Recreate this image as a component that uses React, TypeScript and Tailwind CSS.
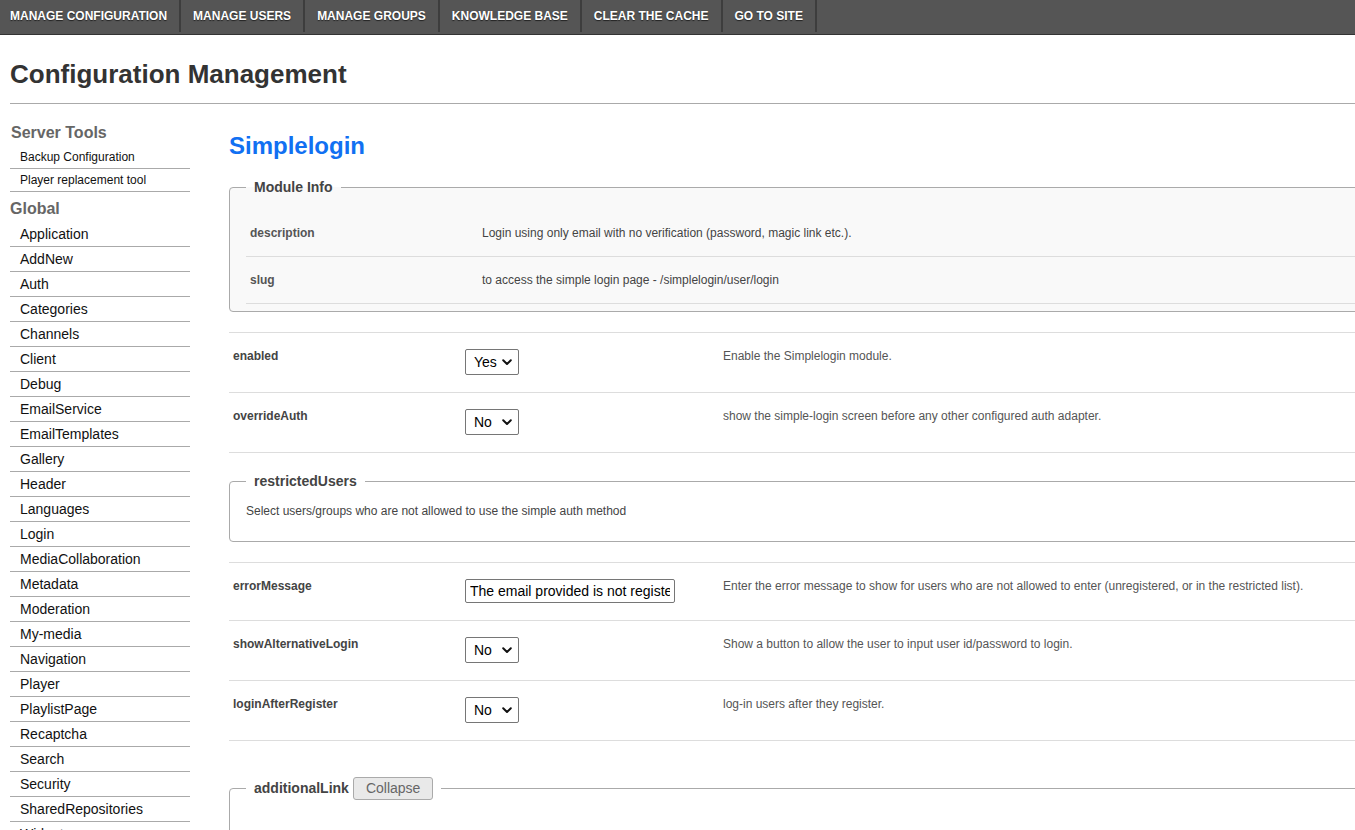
import React from 'react';

const navItems = ['Manage Configuration', 'Manage Users', 'Manage Groups', 'Knowledge Base', 'Clear the cache', 'Go to site'];
const serverTools = ['Backup Configuration', 'Player replacement tool'];
const globalModules = [
  'Application', 'AddNew', 'Auth', 'Categories', 'Channels', 'Client', 'Debug', 'EmailService', 'EmailTemplates',
  'Gallery', 'Header', 'Languages', 'Login', 'MediaCollaboration', 'Metadata', 'Moderation', 'My-media', 'Navigation',
  'Player', 'PlaylistPage', 'Recaptcha', 'Search', 'Security', 'SharedRepositories', 'Widgets',
];

const Chevron = () => (
  <svg width="10" height="7" viewBox="0 0 10 7" className="pointer-events-none absolute right-[7px] top-[10px]">
    <path d="M1.2 1.3 L5 5 L8.8 1.3" fill="none" stroke="#111" strokeWidth="2" strokeLinecap="round" strokeLinejoin="round" />
  </svg>
);

const YesNo: React.FC<{ value: 'Yes' | 'No' }> = ({ value }) => (
  <div className="relative h-[26px] w-[54px]">
    <select
      defaultValue={value}
      className="h-[26px] w-[54px] appearance-none rounded-[2px] border border-[#767676] bg-white pl-[8px] text-[14px] text-black outline-none"
    >
      <option>Yes</option>
      <option>No</option>
    </select>
    <Chevron />
  </div>
);

const SettingRow: React.FC<{ label: string; control: React.ReactNode; help: string }> = ({ label, control, help }) => (
  <div className="grid grid-cols-[232px_258px_1fr] border-b border-[#ddd] pb-[17px] pl-[4px] pt-4">
    <div className="text-[12px] font-bold leading-[14px] text-[#444]">{label}</div>
    <div>{control}</div>
    <div className="text-[12px] leading-[14px] text-[#555]">{help}</div>
  </div>
);

const InfoRow: React.FC<{ label: string; value: string }> = ({ label, value }) => (
  <div className="grid h-[47px] grid-cols-[232px_1fr] items-center border-b border-[#ddd] pl-[4px]">
    <div className="text-[12px] font-bold text-[#555]">{label}</div>
    <div className="text-[12px] text-[#444]">{value}</div>
  </div>
);

export default function App() {
  return (
    <div className="h-[830px] w-full overflow-hidden bg-white font-['Liberation_Sans',Arial,sans-serif] text-[#222]">
      <nav className="flex h-[35px] w-full border-b border-[#333] bg-[#555] pb-[2px]">
        {navItems.map((item, i) => (
          <a
            key={item}
            href="#"
            className={`flex items-center border-r-2 border-[#3d3d3d] pr-[12px] text-[12px] font-bold uppercase text-white [text-shadow:0_1px_1px_#222] ${i === 0 ? 'pl-[10px]' : 'pl-[12px]'}`}
          >
            {item}
          </a>
        ))}
      </nav>

      <div className="w-[1500px] px-[10px]">
        <h1 className="mt-[24px] text-[26px] font-bold leading-[30px] text-[#333]">Configuration Management</h1>
        <hr className="mt-[14px] border-t border-[#aaa]" />

        <div className="flex">
          <aside className="w-[180px] shrink-0 pt-[18px]">
            <h2 className="mb-[2px] h-[22px] pl-[1px] text-[16px] font-bold leading-[22px] text-[#666]">Server Tools</h2>
            <ul>
              {serverTools.map((t) => (
                <li key={t} className="flex h-[23px] items-center border-b border-[#aaa] pl-[10px] text-[12px] text-[#111]">{t}</li>
              ))}
            </ul>
            <h2 className="mb-[2px] mt-[6px] h-[22px] text-[16px] font-bold leading-[22px] text-[#666]">Global</h2>
            <ul>
              {globalModules.map((m) => (
                <li key={m} className="flex h-[25px] items-center border-b border-[#aaa] pl-[10px] text-[14px] text-[#111]">{m}</li>
              ))}
            </ul>
          </aside>

          <main className="ml-[39px] w-[1250px] shrink-0 pt-[28px]">
            <h2 className="text-[24px] font-bold leading-[28px] text-[#1170f2]">Simplelogin</h2>

            <fieldset className="mt-[19px] rounded-[4px] border border-[#aaa] bg-[#f9f9f9] px-4 pb-[7px] pt-[14px]">
              <legend className="px-2 text-[14px] font-bold leading-[17px] text-[#444]">Module Info</legend>
              <InfoRow label="description" value="Login using only email with no verification (password, magic link etc.)." />
              <InfoRow label="slug" value="to access the simple login page - /simplelogin/user/login" />
            </fieldset>

            <div className="mt-[20px] border-t border-[#ddd]">
              <SettingRow label="enabled" control={<YesNo value="Yes" />} help="Enable the Simplelogin module." />
              <SettingRow label="overrideAuth" control={<YesNo value="No" />} help="show the simple-login screen before any other configured auth adapter." />
            </div>

            <fieldset className="mt-[20px] rounded-[4px] border border-[#aaa] px-4 pb-[23px] pt-[14px]">
              <legend className="px-2 text-[14px] font-bold leading-[17px] text-[#444]">restrictedUsers</legend>
              <p className="text-[12px] leading-[14px] text-[#444]">Select users/groups who are not allowed to use the simple auth method</p>
            </fieldset>

            <div className="mt-[20px] border-t border-[#ddd]">
              <SettingRow
                label="errorMessage"
                control={
                  <input
                    defaultValue="The email provided is not registered with us."
                    className="h-[24px] w-[210px] rounded-[2px] border border-[#767676] bg-white px-[4px] text-[14px] text-black outline-none"
                  />
                }
                help="Enter the error message to show for users who are not allowed to enter (unregistered, or in the restricted list)."
              />
              <SettingRow label="showAlternativeLogin" control={<YesNo value="No" />} help="Show a button to allow the user to input user id/password to login." />
              <SettingRow label="loginAfterRegister" control={<YesNo value="No" />} help="log-in users after they register." />
            </div>

            <fieldset className="mt-[36px] h-[200px] rounded-[4px] border border-[#aaa] px-4">
              <legend className="flex items-center px-2">
                <span className="text-[14px] font-bold text-[#444]">additionalLink</span>
                <button className="ml-[4px] h-[23px] rounded-[3px] border border-[#aaa] bg-[#e9e9e9] px-[12px] text-[14px] text-[#666]">Collapse</button>
              </legend>
            </fieldset>
          </main>
        </div>
      </div>
    </div>
  );
}
